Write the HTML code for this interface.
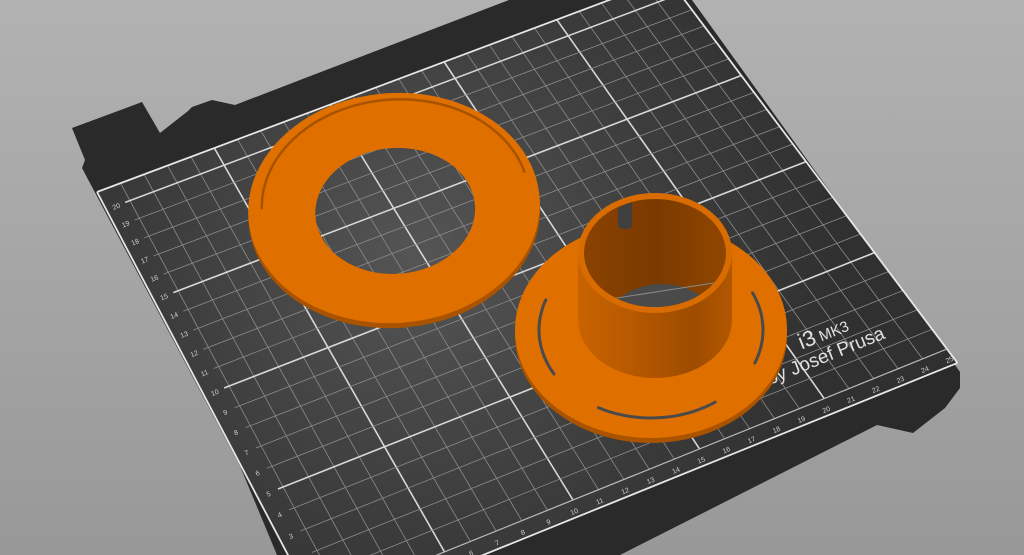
<!DOCTYPE html>
<html><head><meta charset="utf-8"><style>
html,body{margin:0;padding:0;width:1024px;height:555px;overflow:hidden;background:#a8a8a8}
svg{display:block;overflow:hidden}
</style></head><body>
<svg id="s" width="1024" height="555" viewBox="0 0 1024 555" xmlns="http://www.w3.org/2000/svg">
<defs>
<linearGradient id="bg" x1="0" y1="0" x2="0" y2="1">
<stop offset="0" stop-color="#b2b2b2"/><stop offset="1" stop-color="#989898"/></linearGradient>
<radialGradient id="gl" cx="420" cy="260" r="420" gradientUnits="userSpaceOnUse">
<stop offset="0" stop-color="#555"/><stop offset="0.6" stop-color="#3d3d3d"/><stop offset="1" stop-color="#303030"/></radialGradient>
<linearGradient id="cyl" x1="0" y1="0" x2="1" y2="0">
<stop offset="0" stop-color="#c96300"/><stop offset="0.35" stop-color="#b65900"/><stop offset="0.75" stop-color="#9e4c00"/><stop offset="1" stop-color="#b35700"/></linearGradient>
<linearGradient id="inw" x1="0" y1="0" x2="1" y2="0">
<stop offset="0" stop-color="#8a4200"/><stop offset="0.5" stop-color="#7a3a00"/><stop offset="1" stop-color="#904600"/></linearGradient>
<clipPath id="inClip"><ellipse cx="655" cy="253" rx="71" ry="54"/></clipPath>
<mask id="holeMask" maskUnits="userSpaceOnUse" x="0" y="0" width="1024" height="555">
<rect width="1024" height="555" fill="#fff"/>
<ellipse cx="395" cy="211" rx="80" ry="63" fill="#000"/>
</mask>
</defs>
<rect width="1024" height="555" fill="url(#bg)"/>
<polygon fill="#2a2a2a" points="72,128 142,102 160,133 188,111 192,107 212,100 235,105 300,80 509,0 692,0 960,372 960,388 945,408 913,433 877,425 620,555 277,555 240,466 82,168 85,160"/>
<g id="grid"></g>
<g font-family="Liberation Sans, sans-serif" fill="#e0e0e0">
<text transform="translate(850,330) rotate(-22)" text-anchor="end" font-size="15"><tspan font-size="22">i3</tspan> MK3</text>
<text transform="translate(886,338) rotate(-22)" text-anchor="end" font-size="19">by Josef Prusa</text>
</g>
<!-- ring 1 -->
<g transform="rotate(-4 394 208)">
<g mask="url(#holeMask)">
<ellipse cx="394" cy="213" rx="146" ry="115" fill="#a95300"/>
</g>
<path fill-rule="evenodd" fill="#df7000" d="M248,208 a146,115 0 1,0 292,0 a146,115 0 1,0 -292,0 Z M315,211 a80,63 0 1,0 160,0 a80,63 0 1,0 -160,0 Z"/>
<path fill="none" stroke="#a85200" stroke-width="2.5" d="M262,200 A134,104 0 0,1 527,182"/>
</g>
<!-- part 2 flange -->
<ellipse cx="651" cy="335" rx="136" ry="108" fill="#a95300"/>
<ellipse cx="651" cy="330" rx="136" ry="108" fill="#df7000"/>
<g id="slots" fill="none" stroke="#4a4a4a" stroke-width="3" stroke-linecap="round"></g>
<!-- cylinder -->
<path fill="url(#cyl)" d="M578,253 L578,320 A77,58 0 0,0 732,320 L732,253 Z"/>
<ellipse cx="655" cy="253" rx="77" ry="60" fill="#d86c00"/>
<ellipse cx="655" cy="253" rx="71" ry="54" fill="url(#inw)"/>
<g clip-path="url(#inClip)">
<ellipse cx="662" cy="336" rx="62" ry="52" fill="#4a4a4a"/>
<path d="M604,300 L720,282" stroke="#888" stroke-width="1"/>
</g>
<path d="M618,208 l0,18 a8,6 0 0,0 14,0 l0,-24" fill="#3f3f3f"/>
</svg>
<script>
(function(){
var src=[[0,210],[250,210],[250,0],[100,0]];
var dst=[[97,192],[668,-22],[947,349],[573,500]];
var A=[],b=[];
for(var i=0;i<4;i++){var u=src[i][0],v=src[i][1],x=dst[i][0],y=dst[i][1];
A.push([u,v,1,0,0,0,-u*x,-v*x]);b.push(x);
A.push([0,0,0,u,v,1,-u*y,-v*y]);b.push(y);}
var n=8;for(var c=0;c<n;c++){var p=c;for(var r=c+1;r<n;r++)if(Math.abs(A[r][c])>Math.abs(A[p][c]))p=r;
var t=A[c];A[c]=A[p];A[p]=t;t=b[c];b[c]=b[p];b[p]=t;
for(var r=0;r<n;r++){if(r==c)continue;var f=A[r][c]/A[c][c];for(var k=c;k<n;k++)A[r][k]-=f*A[c][k];b[r]-=f*b[c];}}
var h=[];for(var i=0;i<n;i++)h.push(b[i]/A[i][i]);
function P(u,v){var w=h[6]*u+h[7]*v+1;return[(h[0]*u+h[1]*v+h[2])/w,(h[3]*u+h[4]*v+h[5])/w];}
var ns="http://www.w3.org/2000/svg",g=document.getElementById('grid');
function poly(pts,fill){var e=document.createElementNS(ns,'polygon');e.setAttribute('points',pts.map(function(p){return p[0].toFixed(1)+','+p[1].toFixed(1)}).join(' '));e.setAttribute('fill',fill);g.appendChild(e);}
function line(a,b2,col,w){var e=document.createElementNS(ns,'line');e.setAttribute('x1',a[0]);e.setAttribute('y1',a[1]);e.setAttribute('x2',b2[0]);e.setAttribute('y2',b2[1]);e.setAttribute('stroke',col);e.setAttribute('stroke-width',w);g.appendChild(e);}
function txt(p,s,ang){var e=document.createElementNS(ns,'text');e.setAttribute('transform','translate('+p[0].toFixed(1)+','+p[1].toFixed(1)+') rotate('+ang+')');e.setAttribute('font-size','7');e.setAttribute('fill','#cfcfcf');e.setAttribute('font-family','Liberation Sans, sans-serif');e.setAttribute('text-anchor','middle');e.textContent=s;g.appendChild(e);}
poly([P(0,-7),P(250,-7),P(250,210),P(0,210)],'url(#gl)');
for(var u=10;u<250;u+=10){var maj=u%50==0;line(P(u,0),P(u,210),maj?'#d8d8d8':'#8c8c8c',maj?1.6:0.8);}
for(var v=10;v<210;v+=10){var maj=v%50==0;line(P(8,v),P(250,v),maj?'#d8d8d8':'#8c8c8c',maj?1.6:0.8);}
var br='#e6e6e6';
line(P(0,-7),P(250,-7),br,1.8);line(P(250,-7),P(250,210),br,1.8);line(P(250,210),P(0,210),br,1.8);line(P(0,210),P(0,-7),br,1.8);
line(P(8,0),P(250,0),'#bbb',1.2);
for(var i=1;i<=25;i++){txt(P(i*10-2,-5.5),String(i),-22);}
for(var j=1;j<=20;j++){txt(P(4,j*10-1.5),String(j),-22);}
var sg=document.getElementById('slots');
function arc(t1,t2){var cx=651,cy=330,rx=112,ry=88,d='';for(var k=0;k<=20;k++){var t=(t1+(t2-t1)*k/20)*Math.PI/180;d+=(k?'L':'M')+(cx+rx*Math.cos(t)).toFixed(1)+','+(cy+ry*Math.sin(t)).toFixed(1);}var e=document.createElementNS(ns,'path');e.setAttribute('d',d);sg.appendChild(e);}
arc(55,118);arc(150,200);arc(-25,22);
})();
</script>
</body></html>
